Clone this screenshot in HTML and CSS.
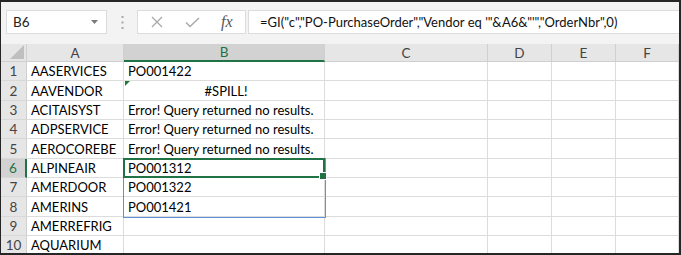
FILE: index.html
```html
<!DOCTYPE html>
<html lang="en">
<head>
  <meta charset="UTF-8">
  <title>Libro1 - Excel</title>
  <link rel="stylesheet" href="styles.css">
</head>
<body>
  <div class="window">
    <!-- Barra de fórmulas -->
    <div class="formula-bar">
      <div class="name-box">
        <span>B6</span>
        <svg class="caret" width="7" height="4" viewBox="0 0 7 4"><polygon points="0,0 7,0 3.5,4" fill="#7a7a7a"/></svg>
      </div>
      <div class="grip">
        <svg width="3" height="13" viewBox="0 0 3 13">
          <rect x="0.5" y="0" width="2" height="2" fill="#a8a8a8"/>
          <rect x="0.5" y="5.5" width="2" height="2" fill="#a8a8a8"/>
          <rect x="0.5" y="11" width="2" height="2" fill="#a8a8a8"/>
        </svg>
      </div>
      <div class="fn-box">
        <svg class="btn-cancel" width="12" height="12" viewBox="0 0 12 12">
          <path d="M1 1 L11 11 M11 1 L1 11" stroke="#a9a9a9" stroke-width="1.3" fill="none"/>
        </svg>
        <svg class="btn-enter" width="15" height="11" viewBox="0 0 15 11">
          <path d="M1 5.5 L5 9.5 L14 1" stroke="#a9a9a9" stroke-width="1.5" fill="none"/>
        </svg>
        <span class="fx">fx</span>
      </div>
      <div class="formula-input">=GI("c","PO-PurchaseOrder","Vendor eq '"&amp;A6&amp;"'","OrderNbr",0)</div>
    </div>

    <!-- Hoja -->
    <div class="sheet">
      <div class="corner">
        <svg width="14" height="14" viewBox="0 0 14 14"><polygon points="14,0 14,14 0,14" fill="#bfbfbf"/></svg>
      </div>
      <div class="col-head">A</div>
      <div class="col-head active">B</div>
      <div class="col-head">C</div>
      <div class="col-head">D</div>
      <div class="col-head">E</div>
      <div class="col-head">F</div>

      <div class="row-head">1</div>
      <div class="cell">AASERVICES</div>
      <div class="cell">PO001422</div>
      <div class="cell"></div><div class="cell"></div><div class="cell"></div><div class="cell"></div>

      <div class="row-head">2</div>
      <div class="cell">AAVENDOR</div>
      <div class="cell spill-error"><span class="err-flag"></span>#SPILL!</div>
      <div class="cell"></div><div class="cell"></div><div class="cell"></div><div class="cell"></div>

      <div class="row-head">3</div>
      <div class="cell">ACITAISYST</div>
      <div class="cell">Error! Query returned no results.</div>
      <div class="cell"></div><div class="cell"></div><div class="cell"></div><div class="cell"></div>

      <div class="row-head">4</div>
      <div class="cell">ADPSERVICE</div>
      <div class="cell">Error! Query returned no results.</div>
      <div class="cell"></div><div class="cell"></div><div class="cell"></div><div class="cell"></div>

      <div class="row-head">5</div>
      <div class="cell">AEROCOREBE</div>
      <div class="cell">Error! Query returned no results.</div>
      <div class="cell"></div><div class="cell"></div><div class="cell"></div><div class="cell"></div>

      <div class="row-head active">6</div>
      <div class="cell">ALPINEAIR</div>
      <div class="cell selected">
        PO001312
        <span class="spill-range"></span>
        <span class="selection"><span class="handle"></span></span>
      </div>
      <div class="cell"></div><div class="cell"></div><div class="cell"></div><div class="cell"></div>

      <div class="row-head">7</div>
      <div class="cell">AMERDOOR</div>
      <div class="cell">PO001322</div>
      <div class="cell"></div><div class="cell"></div><div class="cell"></div><div class="cell"></div>

      <div class="row-head">8</div>
      <div class="cell">AMERINS</div>
      <div class="cell">PO001421</div>
      <div class="cell"></div><div class="cell"></div><div class="cell"></div><div class="cell"></div>

      <div class="row-head">9</div>
      <div class="cell">AMERREFRIG</div>
      <div class="cell"></div>
      <div class="cell"></div><div class="cell"></div><div class="cell"></div><div class="cell"></div>

      <div class="row-head">10</div>
      <div class="cell">AQUARIUM</div>
      <div class="cell"></div>
      <div class="cell"></div><div class="cell"></div><div class="cell"></div><div class="cell"></div>
    </div>
  </div>
</body>
</html>
```

FILE: styles.css
```css
body {
  margin: 0;
  font-family: 'Lato', 'Noto Sans', sans-serif;
  background-color: #fff;
}
.window {
  width: 681px;
  height: 255px;
  box-sizing: border-box;
  border: 2px solid #262626;
  border-left-width: 1px;
  overflow: hidden;
  background-color: #fff;
}

/* Barra de fórmulas */
.formula-bar {
  display: flex;
  align-items: flex-start;
  height: 42px;
  box-sizing: border-box;
  padding: 8px 0 0 5px;
  background-color: #f3f3f3;
}
.name-box,
.fn-box,
.formula-input {
  height: 24px;
  box-sizing: border-box;
  background-color: #fff;
  border: 1px solid #dcdcdc;
}
.name-box {
  width: 101px;
  display: flex;
  align-items: center;
  justify-content: space-between;
  padding: 0 8px 0 6px;
  font-size: 13.5px;
  color: #222;
}
.grip {
  width: 30px;
  display: flex;
  justify-content: center;
  padding-top: 6px;
}
.fn-box {
  width: 109px;
  display: flex;
  align-items: center;
  padding-left: 13px;
}
.btn-enter {
  margin-left: 22px;
}
.fx {
  margin-left: 21px;
  font-family: 'Liberation Serif', serif;
  font-style: italic;
  font-size: 16px;
  color: #555;
}
.formula-input {
  flex: 1;
  margin-left: 2px;
  border-right: none;
  padding-left: 11px;
  font-size: 13px;
  line-height: 22px;
  color: #111;
  white-space: nowrap;
}

/* Hoja de cálculo */
.sheet {
  display: grid;
  grid-template-columns: 26px 97px 201px 163px 64px 64px 1fr;
  grid-template-rows: 18px repeat(10, 19.35px);
}
.corner,
.col-head,
.row-head {
  background-color: #e6e6e6;
  color: #444;
  font-size: 13.5px;
  box-sizing: border-box;
  border-right: 1px solid #cfcfcf;
  border-bottom: 1px solid #cfcfcf;
}
.corner {
  display: flex;
  align-items: flex-end;
  justify-content: flex-end;
  padding: 0 2px 2px 0;
}
.col-head {
  display: flex;
  align-items: center;
  justify-content: center;
}
.row-head {
  display: flex;
  align-items: flex-end;
  justify-content: center;
  line-height: 18px;
  border-bottom-color: #d8d8d8;
}
.col-head.active {
  background-color: #d2d2d2;
  color: #217346;
  border-bottom: 2px solid #217346;
}
.row-head.active {
  background-color: #d2d2d2;
  color: #217346;
  border-right: 2px solid #217346;
}
.cell {
  position: relative;
  box-sizing: border-box;
  border-right: 1px solid #dcdcdc;
  border-bottom: 1px solid #dcdcdc;
  padding-left: 4px;
  font-size: 13px;
  line-height: 18px;
  color: #000;
  white-space: nowrap;
  display: flex;
  align-items: flex-end;
}
.spill-error {
  justify-content: center;
}
.err-flag {
  position: absolute;
  top: 0;
  left: 1px;
  width: 0;
  height: 0;
  border-top: 5px solid #1e7b3c;
  border-right: 5px solid transparent;
}
.spill-range {
  position: absolute;
  z-index: 2;
  top: -1px;
  left: -1px;
  width: calc(100% + 1px);
  height: 58px;
  border: 1px solid #5e92d8;
}
.selection {
  position: absolute;
  z-index: 3;
  top: -1px;
  left: -1px;
  width: calc(100% + 2px);
  height: calc(100% + 2px);
  box-sizing: border-box;
  border: 2px solid #217346;
}
.handle {
  position: absolute;
  right: -4px;
  bottom: -4px;
  width: 6px;
  height: 6px;
  background-color: #217346;
  border: 1px solid #fff;
}
```
